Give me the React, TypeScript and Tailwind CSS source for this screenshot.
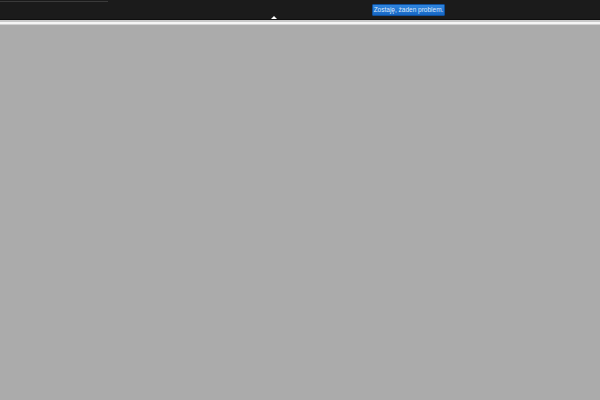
export default function App() {
  return (
    <div className="w-[600px] h-[400px] bg-[#ababab] flex flex-col" style={{ fontFamily: '"Liberation Sans", Arial, sans-serif' }}>
      <div className="relative h-[20px] bg-[#1b1b1b] border-b border-[#0e0e0e] flex items-start">
        <div className="absolute left-0 top-[1px] w-[108px] h-[1px] bg-[#3a3a3a]" />
        <div className="absolute left-[271px] top-[16px] w-0 h-0 border-l-[3px] border-r-[3px] border-b-[3px] border-l-transparent border-r-transparent border-b-white" />
        <button className="absolute left-[372px] top-[4px] w-[73px] h-[12px] px-0 bg-gradient-to-b from-[#2f86e0] to-[#1667c4] border border-[#0f4f9a] text-[#dde8fa] text-[6.5px] leading-[10px] whitespace-nowrap flex items-center justify-center rounded-[1px]">
          Zostaję, żaden problem.
        </button>
      </div>
      <div className="h-[2px] bg-[#c9c9c9]" />
      <div className="h-[2px] bg-[#f5f5f5]" />
      <div className="h-[1px] bg-[#d0d0d0]" />
      <div className="flex-1 bg-[#ababab]" />
    </div>
  );
}
